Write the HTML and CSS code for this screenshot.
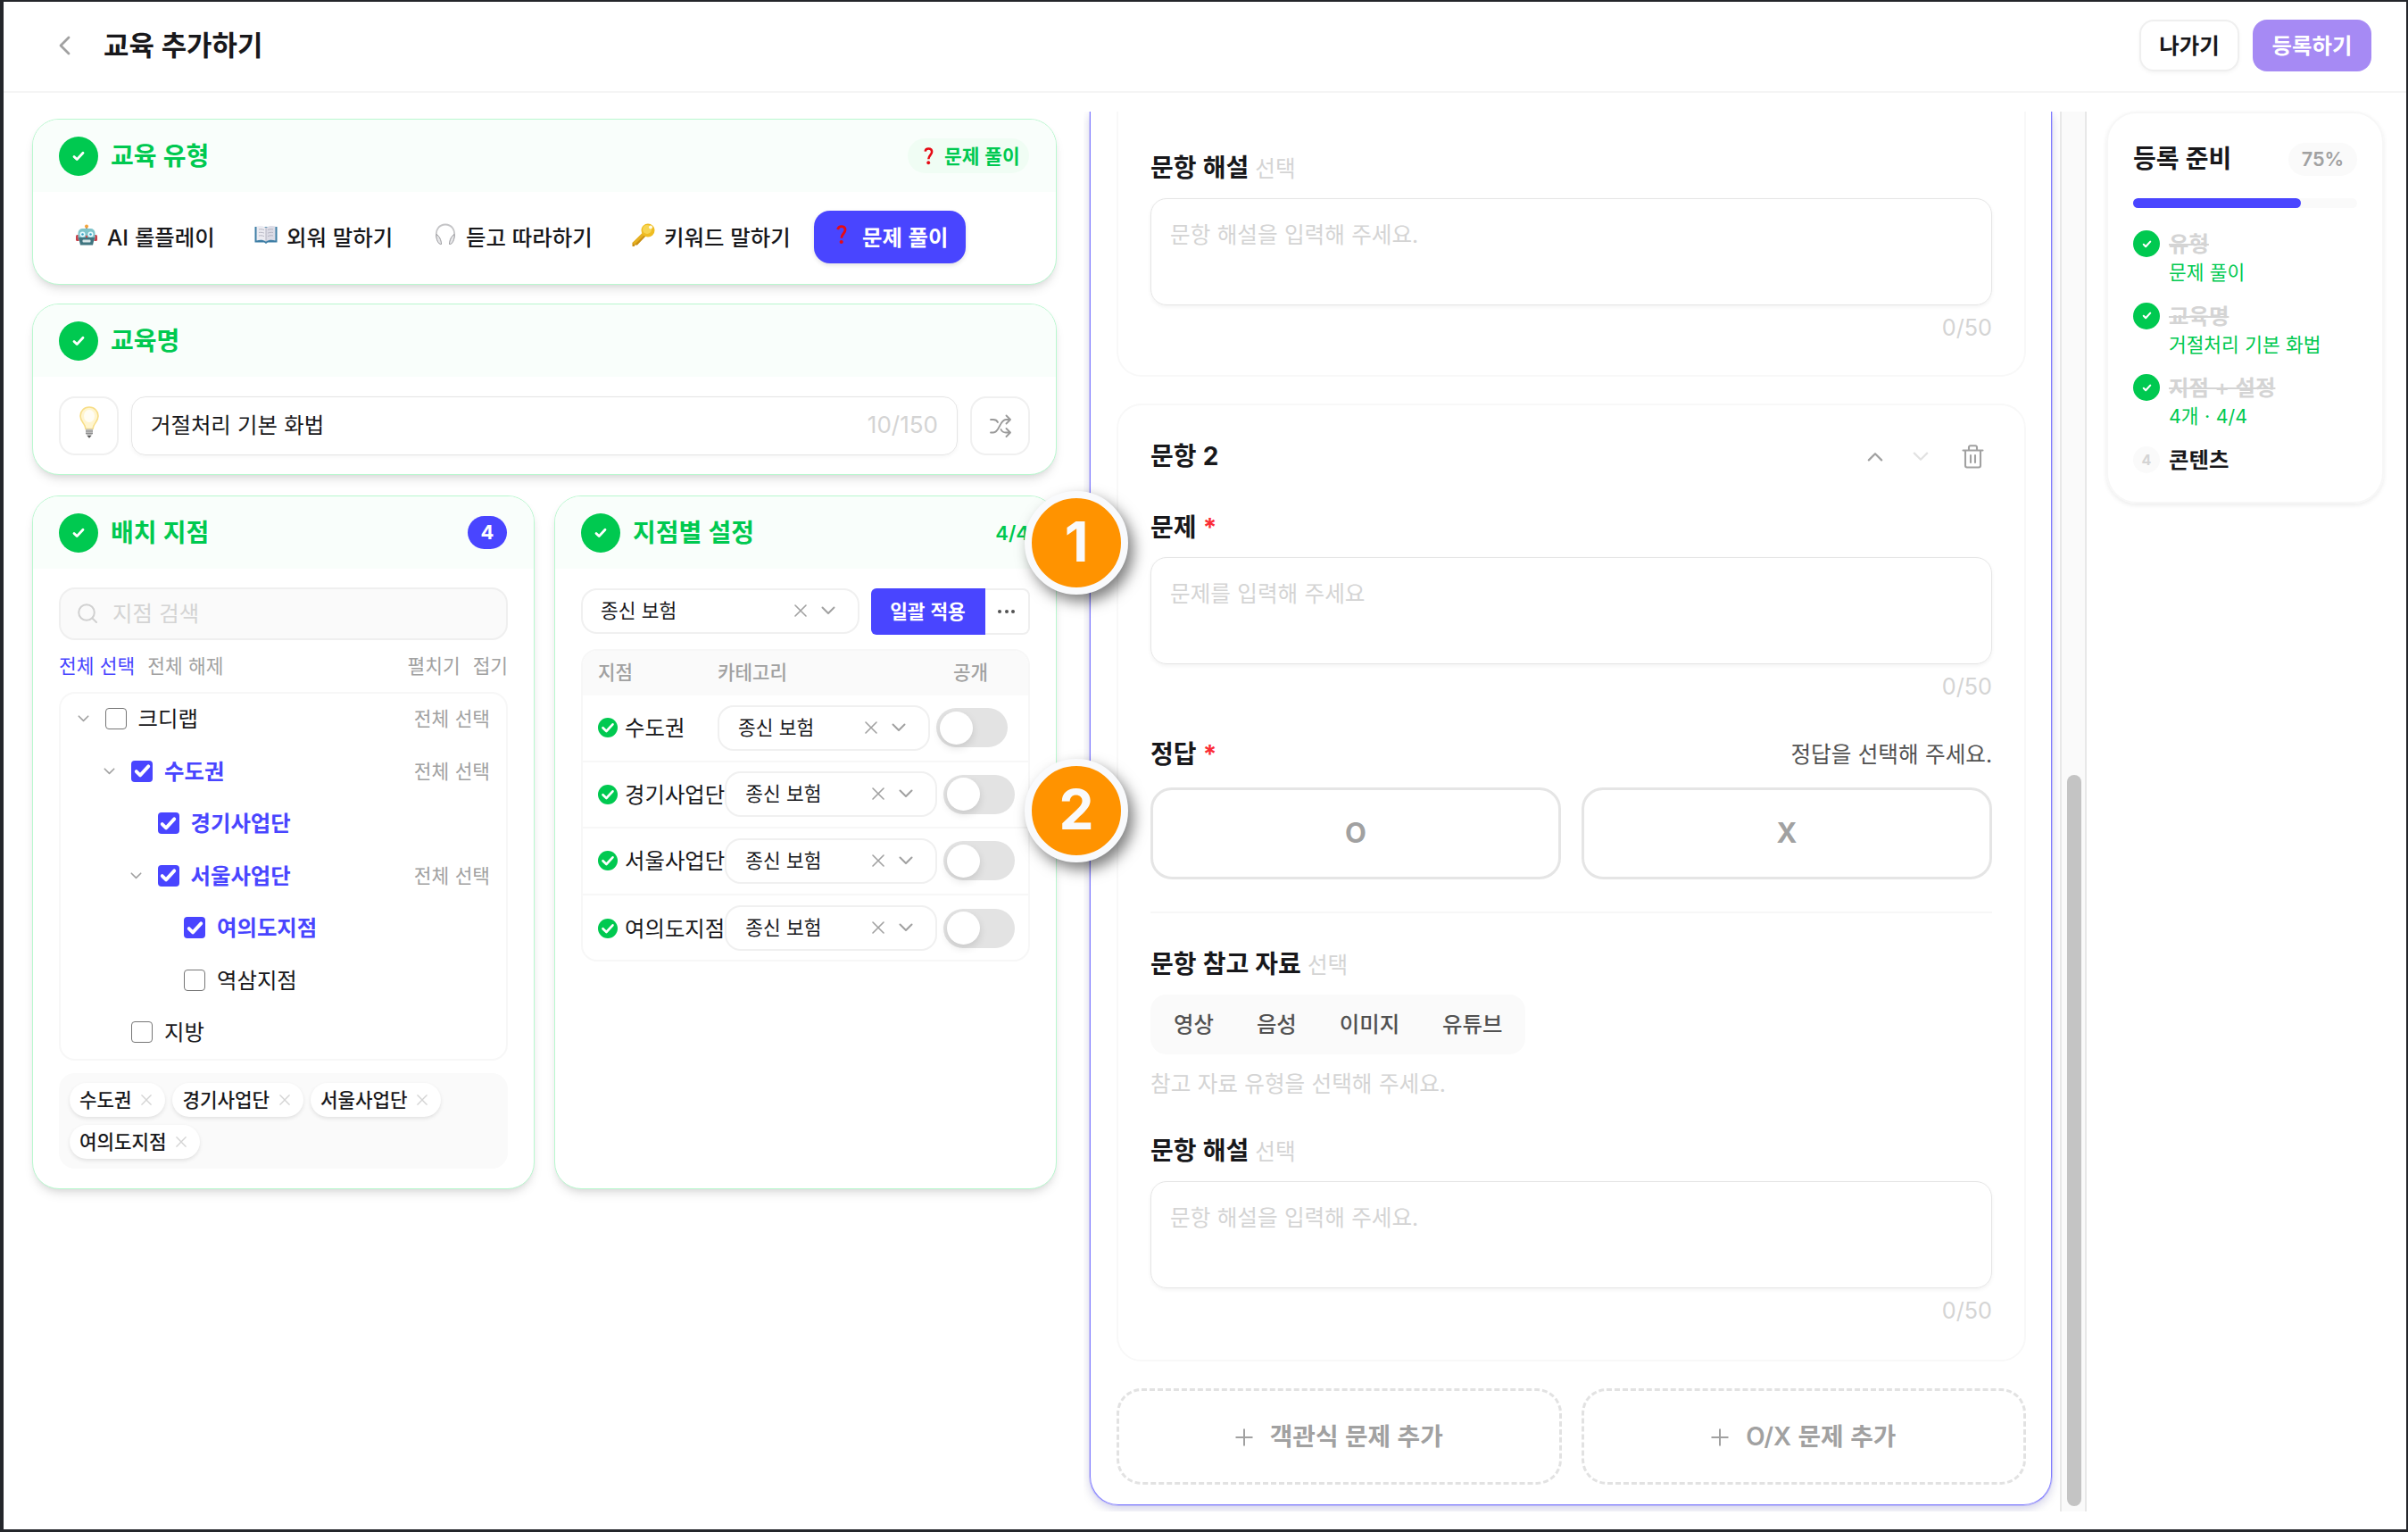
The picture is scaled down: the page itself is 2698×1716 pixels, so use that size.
FILE: index.html
```html
<!DOCTYPE html>
<html lang="ko">

<head>
    <meta charset="UTF-8">
    <meta name="viewport" content="width=device-width, initial-scale=1.0">
    <title>교육 추가하기</title>
    <link rel="stylesheet" href="styles.css">
</head>

<body>
    <!-- icons -->
    <svg class="sprite" xmlns="http://www.w3.org/2000/svg">
        <symbol id="check" viewBox="0 0 14 12">
            <path d="M2 6.4 5.2 9.6 12 2.2" fill="none" stroke="currentColor" stroke-width="2.8" stroke-linecap="round" stroke-linejoin="round" />
        </symbol>
        <symbol id="down" viewBox="0 0 16 10">
            <path d="M1.5 1.5 8 8l6.500-6.500" fill="none" stroke="currentColor" stroke-width="2" stroke-linecap="round" stroke-linejoin="round" />
        </symbol>
        <symbol id="close" viewBox="0 0 14 14">
            <path d="M1 1 13 13M13 1 1 13" fill="none" stroke="currentColor" stroke-width="1.6" stroke-linecap="round" />
        </symbol>
        <symbol id="plus" viewBox="0 0 20 20">
            <path d="M10 .5v19M.5 10h19" fill="none" stroke="currentColor" stroke-width="2" />
        </symbol>
        <symbol id="question" viewBox="0 0 12 22">
            <path d="M1.800 5.200C2 2.800 3.600 1.600 5.800 1.600c2.500 0 4.200 1.500 4.200 4 0 3.700-4 4.200-4.200 9" fill="none" stroke="#e60a14" stroke-width="2.800" />
            <circle cx="5.700" cy="19" r="2.100" fill="#e60a14" />
        </symbol>
        <symbol id="done" viewBox="0 0 22 22">
            <circle cx="11" cy="11" r="11" fill="#00c950" />
            <path d="M5.500 11.200 9.400 15 16.500 7.300" fill="none" stroke="#fff" stroke-width="2.600" stroke-linecap="round" stroke-linejoin="round" />
        </symbol>
    </svg>

    <header class="topbar">
        <svg class="back" viewBox="0 0 14 22"><path d="M12 2 3 11l9 9" /></svg>
        <h1>교육 추가하기</h1>
        <div class="topbar-actions">
            <button class="btn-exit">나가기</button>
            <button class="btn-submit">등록하기</button>
        </div>
    </header>

    <main>
        <section class="left">
            <div class="card card-type">
                <div class="card-head">
                    <span class="circle"><svg><use href="#check" /></svg></span>
                    <h2>교육 유형</h2>
                    <span class="type-badge"><svg><use href="#question" /></svg>문제 풀이</span>
                </div>
                <div class="types">
                    <button class="type type-ai">
                        <svg class="emoji" viewBox="0 0 26 26">
                            <rect x="1" y="13" width="4" height="7" rx="1.500" fill="#c9414a" />
                            <rect x="21" y="13" width="4" height="7" rx="1.500" fill="#c9414a" />
                            <path d="M12 4h2v4h-2z" fill="#7a8d96" />
                            <circle cx="13" cy="3.500" r="2" fill="#f2a33c" />
                            <rect x="3.500" y="6" width="19" height="15" rx="5" fill="#7fc4ca" />
                            <path d="M4 16h18l-2 8.500H6z" fill="#3f7580" />
                            <circle cx="8.500" cy="12.500" r="3" fill="#e9fbff" />
                            <circle cx="17.500" cy="12.500" r="3" fill="#e9fbff" />
                            <circle cx="8.500" cy="12.500" r="1.300" fill="#37a3c4" />
                            <circle cx="17.500" cy="12.500" r="1.300" fill="#37a3c4" />
                            <path d="m13 13 1.500 3h-3z" fill="#d63d3d" />
                            <rect x="8.500" y="18.500" width="9" height="3" rx="1" fill="#d8e6e8" />
                        </svg>AI 롤플레이
                    </button>
                    <button class="type type-memo">
                        <svg class="emoji" viewBox="0 0 26 26">
                            <path d="M.5 4h25v17.500H15l-2 1.500-2-1.500H.5z" fill="#3f7fa6" />
                            <path d="M2.500 3.500C6 2.500 10 2.800 13 5v15.500c-3-2-7-2-10.500-1z" fill="#ececf2" />
                            <path d="M23.500 3.500C20 2.500 16 2.800 13 5v15.500c3-2 7-2 10.500-1z" fill="#dcdce6" />
                            <path d="M5 7c2-.4 4-.2 6 .6M5 10.500c2-.4 4-.2 6 .6M5 14c2-.4 4-.2 6 .6M21 7c-2-.4-4-.2-6 .6M21 10.500c-2-.4-4-.2-6 .6M21 14c-2-.4-4-.2-6 .6M13 5v15.500" fill="none" stroke="#a9a9b8" stroke-width=".8" />
                        </svg>외워 말하기
                    </button>
                    <button class="type type-listen">
                        <svg class="emoji" viewBox="0 0 26 26">
                            <path d="M3.500 16C1 8 6 1.500 13 1.500S25 8 22.500 16" fill="none" stroke="#c4c4c6" stroke-width="1.800" />
                            <path d="M3 12.500c3 1.500 5.500 6.500 5.500 11-3 1-6.500-6-5.500-11z" fill="#e6e6e8" stroke="#98989c" />
                            <path d="M23 12.500c-3 1.500-5.500 6.500-5.500 11 3 1 6.500-6 5.500-11z" fill="#e6e6e8" stroke="#98989c" />
                        </svg>듣고 따라하기
                    </button>
                    <button class="type type-keyword">
                        <svg class="emoji" viewBox="0 0 26 26">
                            <path d="m13 11 3 3L6 24.500H3V26H.5v-4z" fill="#c98f12" />
                            <path d="m12 10.500 2.500 2.500L3 24 .5 22z" fill="#e5b021" />
                            <circle cx="18" cy="8" r="7.500" fill="#efbd22" />
                            <circle cx="17" cy="7" r="5" fill="#f7d552" />
                            <circle cx="21" cy="4.500" r="2" fill="#fffbe8" />
                        </svg>키워드 말하기
                    </button>
                    <button class="type type-quiz active">
                        <span class="emoji"><svg class="q"><use href="#question" /></svg></span>문제 풀이
                    </button>
                </div>
            </div>

            <div class="card card-name">
                <div class="card-head">
                    <span class="circle"><svg><use href="#check" /></svg></span>
                    <h2>교육명</h2>
                </div>
                <div class="name-row">
                    <button class="icon-btn">
                        <svg class="bulb" viewBox="0 0 22 36">
                            <path d="M11 1C5 1 1 5.500 1 11c0 5 3.500 7.500 5 11 .6 1.500 1 3.500 1 3.500h8s.4-2 1-3.500c1.500-3.500 5-6 5-11C21 5.500 17 1 11 1z" fill="#fff5cf" stroke="#f7dd86" stroke-width="1.600" />
                            <ellipse cx="11" cy="11" rx="6" ry="7" fill="#fffdf4" />
                            <path d="M7 25.500h8v5.500l-2 2H9l-2-2z" fill="#bdbdbd" />
                            <path d="M7 28h8M7 30.500h8" stroke="#8f8f8f" />
                            <path d="M8.500 33h5L11 35.800z" fill="#555" />
                        </svg>
                    </button>
                    <div class="name-input"><span>거절처리 기본 화법</span><span class="count">10/150</span></div>
                    <button class="icon-btn">
                        <svg class="shuffle" viewBox="0 0 24 26"><path d="M1 6h3c2.500 0 4 1 5 3M1 20.500h3c7 0 7-14.500 14-14.500h4M12.500 17c1 2.500 3 3.500 5.500 3.500h4M18.500 1.500 23 6l-4.500 4.500M18.500 16l4.500 4.500-4.500 4.500" /></svg>
                    </button>
                </div>
            </div>

            <div class="columns">
                <div class="card card-branch">
                    <div class="card-head">
                        <span class="circle"><svg><use href="#check" /></svg></span>
                        <h2>배치 지점</h2>
                        <span class="num-badge">4</span>
                    </div>
                    <div class="card-body">
                        <div class="search">
                            <svg viewBox="0 0 22 22"><circle cx="10" cy="10" r="8.800" /><path d="m16.500 16.500 4.500 4.500" /></svg>
                            지점 검색
                        </div>
                        <div class="links">
                            <a class="primary">전체 선택</a><a>전체 해제</a>
                            <a class="push">펼치기</a><a>접기</a>
                        </div>
                        <ul class="tree">
                            <li class="lv0"><span class="arrow"><svg><use href="#down" /></svg></span><span class="box"></span>크디랩<a>전체 선택</a></li>
                            <li class="lv1 on"><span class="arrow"><svg><use href="#down" /></svg></span><span class="box"><svg><use href="#check" /></svg></span>수도권<a>전체 선택</a></li>
                            <li class="lv2 on"><span class="arrow"></span><span class="box"><svg><use href="#check" /></svg></span>경기사업단</li>
                            <li class="lv2 on"><span class="arrow"><svg><use href="#down" /></svg></span><span class="box"><svg><use href="#check" /></svg></span>서울사업단<a>전체 선택</a></li>
                            <li class="lv3 on"><span class="arrow"></span><span class="box"><svg><use href="#check" /></svg></span>여의도지점</li>
                            <li class="lv3"><span class="arrow"></span><span class="box"></span>역삼지점</li>
                            <li class="lv1"><span class="arrow"></span><span class="box"></span>지방</li>
                        </ul>
                        <div class="tags">
                            <span class="tag">수도권<svg><use href="#close" /></svg></span>
                            <span class="tag">경기사업단<svg><use href="#close" /></svg></span>
                            <span class="tag">서울사업단<svg><use href="#close" /></svg></span>
                            <span class="tag">여의도지점<svg><use href="#close" /></svg></span>
                        </div>
                    </div>
                </div>

                <div class="card card-setting">
                    <div class="card-head">
                        <span class="circle"><svg><use href="#check" /></svg></span>
                        <h2>지점별 설정</h2>
                        <span class="ratio">4/4</span>
                    </div>
                    <div class="card-body">
                        <div class="bulk">
                            <div class="select">종신 보험<svg class="x"><use href="#close" /></svg><svg class="v"><use href="#down" /></svg></div>
                            <button class="apply">일괄 적용</button>
                            <button class="more"><i></i><i></i><i></i></button>
                        </div>
                        <div class="table">
                            <div class="thead"><span>지점</span><span>카테고리</span><span>공개</span></div>
                            <div class="row">
                                <span class="name"><svg><use href="#done" /></svg>수도권</span>
                                <div class="select">종신 보험<svg class="x"><use href="#close" /></svg><svg class="v"><use href="#down" /></svg></div>
                                <span class="toggle"></span>
                            </div>
                            <div class="row">
                                <span class="name"><svg><use href="#done" /></svg>경기사업단</span>
                                <div class="select">종신 보험<svg class="x"><use href="#close" /></svg><svg class="v"><use href="#down" /></svg></div>
                                <span class="toggle"></span>
                            </div>
                            <div class="row">
                                <span class="name"><svg><use href="#done" /></svg>서울사업단</span>
                                <div class="select">종신 보험<svg class="x"><use href="#close" /></svg><svg class="v"><use href="#down" /></svg></div>
                                <span class="toggle"></span>
                            </div>
                            <div class="row">
                                <span class="name"><svg><use href="#done" /></svg>여의도지점</span>
                                <div class="select">종신 보험<svg class="x"><use href="#close" /></svg><svg class="v"><use href="#down" /></svg></div>
                                <span class="toggle"></span>
                            </div>
                        </div>
                    </div>
                </div>
            </div>
        </section>

        <section class="scroller">
            <div class="panel">
                <div class="question first">
                    <h3>문항 해설 <small>선택</small></h3>
                    <div class="textarea">문항 해설을 입력해 주세요.</div>
                    <p class="counter">0/50</p>
                </div>

                <div class="question second">
                    <div class="question-head">
                        <h3>문항 2</h3>
                        <svg class="up"><use href="#down" /></svg>
                        <svg class="dn"><use href="#down" /></svg>
                        <svg class="trash" viewBox="0 0 24 27"><path d="M1 6.500h22M3.500 6.500V23.500a2 2 0 0 0 2 2h13a2 2 0 0 0 2-2V6.500M7.500 6V3a1.700 1.700 0 0 1 1.700-1.700h5.600A1.700 1.700 0 0 1 16.500 3v3M9.500 12v8M14.500 12v8" /></svg>
                    </div>
                    <h3 class="label-question">문제 <em>*</em></h3>
                    <div class="textarea">문제를 입력해 주세요</div>
                    <p class="counter">0/50</p>

                    <div class="answer-head">
                        <h3>정답 <em>*</em></h3>
                        <span>정답을 선택해 주세요.</span>
                    </div>
                    <div class="answers">
                        <button>O</button>
                        <button>X</button>
                    </div>
                    <hr>

                    <h3 class="label-ref">문항 참고 자료 <small>선택</small></h3>
                    <div class="segment"><span>영상</span><span>음성</span><span>이미지</span><span>유튜브</span></div>
                    <p class="hint">참고 자료 유형을 선택해 주세요.</p>

                    <h3 class="label-desc">문항 해설 <small>선택</small></h3>
                    <div class="textarea">문항 해설을 입력해 주세요.</div>
                    <p class="counter">0/50</p>
                </div>

                <div class="add-row">
                    <button><svg><use href="#plus" /></svg>객관식 문제 추가</button>
                    <button><svg><use href="#plus" /></svg>O/X 문제 추가</button>
                </div>
            </div>
        </section>
        <div class="scrollbar"><div class="thumb"></div></div>

        <aside class="ready">
            <div class="ready-head">
                <h3>등록 준비</h3>
                <span>75%</span>
            </div>
            <div class="progress"><div class="bar" style="width: 75%"></div></div>
            <ol>
                <li class="done">
                    <span class="circle"><svg><use href="#check" /></svg></span>
                    <div><b>유형</b><p>문제 풀이</p></div>
                </li>
                <li class="done">
                    <span class="circle"><svg><use href="#check" /></svg></span>
                    <div><b>교육명</b><p>거절처리 기본 화법</p></div>
                </li>
                <li class="done">
                    <span class="circle"><svg><use href="#check" /></svg></span>
                    <div><b>지점 + 설정</b><p>4개 · 4/4</p></div>
                </li>
                <li>
                    <span class="circle">4</span>
                    <div><b>콘텐츠</b></div>
                </li>
            </ol>
        </aside>
    </main>

    <!-- guide markers -->
    <div class="marker marker-1">1</div>
    <div class="marker marker-2">2</div>
</body>

</html>
```
FILE: styles.css
```css
* {
    box-sizing: border-box;
    margin: 0;
    padding: 0;
}

body {
    position: relative;
    width: 2698px;
    height: 1716px;
    overflow: hidden;
    border: solid #24262b;
    border-width: 2px 2px 3px 4px;
    background: #fff;
    color: #18181b;
    font-family: Inter, "Noto Sans CJK KR", sans-serif;
    font-size: 24.4px;
    line-height: 30px;
    word-spacing: 0.02em;
    white-space: nowrap;
}

button {
    border: 0;
    background: none;
    color: inherit;
    font: inherit;
    word-spacing: inherit;
}

ul,
ol {
    list-style: none;
}

em {
    font-style: normal;
    color: #fb2c36;
}

.sprite {
    display: none;
}

svg {
    flex: none;
}

/* header */
.topbar {
    display: flex;
    align-items: center;
    height: 102px;
    padding: 0 39px 2px 61px;
    border-bottom: 2px solid #f5f5f5;
}

.topbar .back {
    width: 14px;
    height: 22px;
    margin-right: 37px;
    fill: none;
    stroke: #a1a1a1;
    stroke-width: 2.8;
    stroke-linecap: round;
    stroke-linejoin: round;
}

.topbar h1 {
    font-size: 30.9px;
    font-weight: 700;
}

.topbar-actions {
    display: flex;
    gap: 15px;
    margin-left: auto;
}

.btn-exit,
.btn-submit {
    height: 58px;
    border-radius: 16px;
    font-weight: 600;
}

.btn-exit {
    width: 112px;
    border: 2px solid #efefef;
    box-shadow: 0 2px 4px rgba(0, 0, 0, 0.04);
}

.btn-submit {
    width: 133px;
    background: #a68af4;
    color: #fff;
}

main {
    display: flex;
    align-items: flex-start;
    padding: 21px 0 0 32px;
}

/* left side cards */
.left {
    width: 1148px;
    padding-top: 8px;
}

.card {
    overflow: hidden;
    border: 1px solid #b9f8cf;
    border-radius: 30px;
    background: #fff;
    box-shadow: 0 7px 12px -2px rgba(0, 0, 0, 0.1), 0 4px 8px -4px rgba(0, 0, 0, 0.1);
}

.card-head {
    display: flex;
    align-items: center;
    height: 81px;
    padding: 0 30px 0 29px;
    background: #f9fefb;
    color: #00c950;
}

.card-head h2 {
    margin-left: 14px;
    font-size: 28px;
    font-weight: 700;
}

.circle {
    display: flex;
    flex: none;
    align-items: center;
    justify-content: center;
    width: 44px;
    height: 44px;
    border-radius: 50%;
    background: #00c950;
    color: #fff;
}

.circle svg {
    width: 14px;
    height: 12px;
}

.card-type {
    height: 186px;
}

.type-badge {
    display: flex;
    align-items: center;
    width: 136px;
    height: 39px;
    margin-left: auto;
    padding-left: 18px;
    border-radius: 20px;
    background: #f0fdf4;
    font-size: 21.4px;
    font-weight: 600;
}

.type-badge svg {
    width: 11px;
    height: 20px;
    margin-right: 12px;
}

.types {
    display: flex;
    gap: 8px;
    padding: 21px 29px;
}

.type {
    display: flex;
    align-items: center;
    height: 59px;
    padding-left: 18px;
    border-radius: 18px;
    font-weight: 500;
}

.type .emoji {
    width: 26px;
    height: 26px;
    margin: -5px 10px 0 0;
}

.type .q {
    display: block;
    width: 12px;
    height: 22px;
    margin: 2px 7px;
}

.type-ai {
    width: 193px;
}

.type-memo {
    width: 193px;
}

.type-listen {
    width: 214px;
}

.type-keyword {
    width: 214px;
}

.type-quiz {
    width: 170px;
}

.type.active {
    background: #4945ff;
    color: #fff;
    font-weight: 600;
    box-shadow: 0 2px 5px rgba(0, 0, 0, 0.12);
}

.card-name {
    height: 192px;
    margin-top: 21px;
}

.name-row {
    display: flex;
    gap: 14px;
    padding: 22px 29px;
}

.icon-btn {
    display: flex;
    align-items: center;
    justify-content: center;
    width: 67px;
    height: 66px;
    border: 2px solid #f0f0f0;
    border-radius: 18px;
}

.bulb {
    width: 22px;
    height: 36px;
    margin-top: -8px;
}

.shuffle {
    width: 24px;
    height: 26px;
    fill: none;
    stroke: #9a9a9a;
    stroke-width: 1.8;
    stroke-linecap: round;
    stroke-linejoin: round;
}

.name-input {
    display: flex;
    flex: 1;
    align-items: center;
    justify-content: space-between;
    height: 66px;
    padding: 0 21px 2px;
    border: 1.5px solid #e5e5e5;
    border-radius: 16px;
    box-shadow: 0 2px 4px rgba(0, 0, 0, 0.04);
}

.name-input .count {
    color: #d4d4d4;
    font-size: 26px;
}

.columns {
    display: flex;
    justify-content: space-between;
    margin-top: 23px;
}

.columns .card {
    width: 563px;
    height: 777px;
}

.card-body {
    padding: 21px 29px;
}

/* branch tree */
.num-badge {
    width: 44px;
    height: 37px;
    margin-left: auto;
    border-radius: 19px;
    background: #4945ff;
    color: #fff;
    font-size: 22px;
    font-weight: 700;
    line-height: 37px;
    text-align: center;
}

.search {
    display: flex;
    align-items: center;
    gap: 17px;
    height: 59px;
    padding: 0 0 1px 19px;
    border: 2px solid #efefef;
    border-radius: 18px;
    background: #fafafa;
    color: #d4d4d4;
}

.search svg {
    width: 22px;
    height: 22px;
    fill: none;
    stroke: #d0d0d0;
    stroke-width: 2;
    stroke-linecap: round;
}

.links {
    display: flex;
    gap: 14px;
    height: 58px;
    color: #a1a1a1;
    font-size: 21.4px;
    line-height: 58px;
}

.links .primary {
    color: #4945ff;
}

.links .push {
    margin-left: auto;
}

.tree {
    height: 413px;
    border: 2px solid #f7f7f7;
    border-radius: 18px;
}

.tree li {
    display: flex;
    align-items: center;
    height: 58.5px;
    padding: 0 18px 2px 0;
}

.tree li.on {
    color: #4945ff;
    font-weight: 600;
}

.tree .lv0 {
    padding-left: 18.5px;
}

.tree .lv1 {
    padding-left: 48px;
}

.tree .lv2 {
    padding-left: 77.5px;
}

.tree .lv3 {
    padding-left: 107px;
}

.tree .arrow {
    display: flex;
    width: 31px;
    color: #a1a1a1;
}

.tree .arrow svg {
    width: 13px;
    height: 8px;
}

.tree .box {
    display: flex;
    align-items: center;
    justify-content: center;
    width: 24px;
    height: 24px;
    margin-right: 13px;
    border: 1.5px solid #767676;
    border-radius: 4px;
}

.tree .on .box {
    border: 0;
    background: #4945ff;
    color: #fff;
}

.tree .on .box svg {
    width: 19px;
    height: 17px;
}

.tree a {
    margin-left: auto;
    color: #a1a1a1;
    font-size: 21.4px;
    font-weight: 400;
}

.tags {
    display: flex;
    flex-wrap: wrap;
    gap: 8px;
    height: 107px;
    margin-top: 14px;
    padding: 11px 12px;
    border-radius: 18px;
    background: #fafafa;
}

.tag {
    display: flex;
    align-items: center;
    height: 38px;
    padding: 0 15px 0 11px;
    border-radius: 19px;
    background: #fff;
    font-size: 21.2px;
    font-weight: 500;
    box-shadow: 0 2px 4px rgba(0, 0, 0, 0.1);
}

.tag svg {
    width: 12px;
    height: 12px;
    margin-left: 11px;
    color: #d4d4d4;
}

/* branch settings */
.ratio {
    margin-left: auto;
    font-size: 22px;
    font-weight: 600;
}

.bulk {
    display: flex;
    height: 52px;
    margin-top: 1px;
}

.select {
    display: flex;
    flex: none;
    align-items: center;
    width: 238px;
    height: 51px;
    padding: 0 25px 1px 21px;
    border: 2px solid #f0f0f0;
    border-radius: 18px;
    background: #fff;
    font-size: 21.4px;
}

.select .x {
    width: 14px;
    height: 14px;
    margin-left: auto;
    color: #a1a1a1;
}

.select .v {
    width: 16px;
    height: 10px;
    margin-left: 16px;
    color: #a1a1a1;
}

.bulk .select {
    width: 311.5px;
    margin-right: 13px;
    padding-left: 20px;
}

.apply {
    width: 128px;
    border-radius: 6px 0 0 6px;
    background: #4945ff;
    color: #fff;
    font-size: 21.4px;
    font-weight: 600;
}

.more {
    display: flex;
    flex: 1;
    align-items: center;
    justify-content: center;
    gap: 3.5px;
    border: 2px solid #efefef;
    border-left: 0;
    border-radius: 0 8px 8px 0;
}

.more i {
    width: 4px;
    height: 4px;
    border-radius: 50%;
    background: #525252;
}

.table {
    height: 350px;
    margin-top: 16px;
    overflow: hidden;
    border: 2px solid #f7f7f7;
    border-radius: 18px;
}

.thead {
    display: flex;
    height: 50px;
    padding-left: 17px;
    background: #fafafa;
    color: #a1a1a1;
    font-size: 21.2px;
    font-weight: 500;
    line-height: 48px;
}

.thead span {
    flex: none;
    width: 134px;
}

.thead span:nth-child(2) {
    width: 264px;
}

.row {
    display: flex;
    align-items: center;
    height: 74.5px;
    padding-left: 17px;
    border-bottom: 2px solid #f7f7f7;
}

.row:last-child {
    border-bottom: 0;
}

.name {
    display: flex;
    flex: none;
    align-items: center;
    min-width: 134px;
}

.name svg {
    width: 22px;
    height: 22px;
    margin-right: 8px;
}

.toggle {
    flex: none;
    width: 80px;
    height: 44px;
    margin-left: 7px;
    padding: 3.5px;
    border-radius: 22px;
    background: #e3e3e3;
}

.toggle::before {
    content: "";
    display: block;
    width: 37px;
    height: 37px;
    border-radius: 50%;
    background: #fff;
    box-shadow: 0 4px 10px rgba(0, 0, 0, 0.12);
}

/* question panel */
.scroller {
    width: 1094px;
    height: 1568px;
    margin-left: 30px;
    padding: 0 9px 0 7px;
    overflow: hidden;
}

.panel {
    padding: 0 28px 22px 29px;
    border: 1px solid #807cff;
    border-top: 0;
    border-radius: 0 0 32px 32px;
    box-shadow: 0 0 0 1px rgba(73, 69, 255, 0.2), 0 4px 8px rgba(73, 69, 255, 0.12), 0 4px 14px rgba(0, 0, 0, 0.1);
}

.question {
    padding: 0 36px;
    border: 2px solid #f8f8f8;
    border-radius: 28px;
}

.question h3 {
    font-size: 28px;
    font-weight: 700;
    line-height: 36px;
}

.question h3 small {
    color: #d4d4d4;
    font-size: 24.6px;
    font-weight: 400;
}

.question.first {
    height: 297px;
    padding-top: 45px;
    border-top: 0;
    border-radius: 0 0 28px 28px;
}

.question.second {
    height: 1073px;
    margin-top: 30px;
    padding-top: 37px;
}

.question-head {
    display: flex;
    align-items: center;
    height: 40px;
    padding-right: 9px;
    color: #a1a1a1;
}

.question-head h3 {
    margin-right: auto;
    color: #18181b;
}

.question-head .up,
.question-head .dn {
    width: 18px;
    height: 11px;
}

.question-head .up {
    transform: rotate(180deg);
}

.question-head .dn {
    margin: 0 37px 0 33px;
    color: #e2e2e2;
}

.question-head .trash {
    width: 25px;
    height: 27px;
    fill: none;
    stroke: #a1a1a1;
    stroke-width: 2.1;
    stroke-linecap: round;
}

.textarea {
    height: 120px;
    margin-top: 15px;
    padding: 25px 21px;
    border: 1.5px solid #e5e5e5;
    border-radius: 18px;
    box-shadow: 0 2px 4px rgba(0, 0, 0, 0.05);
    color: #d4d4d4;
    font-size: 24.6px;
}

.counter {
    margin-top: 10px;
    color: #d4d4d4;
    font-size: 25.2px;
    text-align: right;
}

.question .label-question {
    margin-top: 42px;
}

.answer-head {
    display: flex;
    align-items: center;
    justify-content: space-between;
    margin-top: 43px;
}

.answer-head span {
    color: #525252;
    font-size: 24.6px;
}

.answers {
    display: grid;
    grid-template-columns: 1fr 1fr;
    gap: 23px;
    margin-top: 19px;
}

.answers button {
    height: 103px;
    padding-bottom: 1px;
    border: 3px solid #e5e5e5;
    border-radius: 24px;
    color: #a1a1a1;
    font-size: 31px;
    font-weight: 700;
}

hr {
    margin-top: 36px;
    border: 0;
    border-top: 2px solid #f7f7f7;
}

.question .label-ref {
    margin-top: 39px;
}

.segment {
    display: inline-flex;
    gap: 4px;
    height: 67px;
    margin-top: 15px;
    padding: 4px;
    border-radius: 18px;
    background: #fafafa;
    color: #525252;
    font-weight: 500;
    line-height: 59px;
    vertical-align: top;
}

.segment span {
    padding: 0 22px;
}

.hint {
    margin-top: 18px;
    color: #d4d4d4;
    font-size: 24.6px;
}

.question .label-desc {
    margin-top: 42px;
}

.add-row {
    display: grid;
    grid-template-columns: 1fr 1fr;
    gap: 22px;
    margin-top: 30px;
}

.add-row button {
    display: flex;
    align-items: center;
    justify-content: center;
    height: 108px;
    padding-bottom: 1px;
    border: 3px dashed #e2e2e2;
    border-radius: 28px;
    color: #a1a1a1;
    font-size: 27.8px;
    font-weight: 600;
}

.add-row svg {
    width: 20px;
    height: 20px;
    margin: 2px 19px 0 0;
}

.scrollbar {
    width: 30px;
    height: 1568px;
    padding: 743px 6px 0;
    border: solid #e8e8e8;
    border-width: 0 2px;
    background: #fafafa;
}

.thumb {
    width: 16px;
    height: 819px;
    border-radius: 8px;
    background: #c4c4c4;
}

/* progress summary */
.ready {
    width: 311px;
    height: 439px;
    margin-left: 22px;
    padding: 32px 28px;
    border: 2px solid #f7f7f7;
    border-radius: 34px;
    box-shadow: 0 2px 5px rgba(0, 0, 0, 0.08);
}

.ready-head {
    display: flex;
    align-items: center;
    justify-content: space-between;
    height: 38px;
}

.ready-head h3 {
    font-size: 28px;
    font-weight: 700;
}

.ready-head span {
    width: 77px;
    border-radius: 19px;
    background: #fafafa;
    color: #a1a1a1;
    font-size: 21.6px;
    font-weight: 600;
    line-height: 37px;
    text-align: center;
}

.progress {
    height: 11px;
    margin: 25px 0 25px;
    border-radius: 6px;
    background: #fafafa;
}

.bar {
    height: 11px;
    border-radius: 6px;
    background: #4945ff;
}

.ready li {
    display: flex;
    gap: 10px;
    height: 80.7px;
}

.ready b {
    display: block;
    font-weight: 600;
    line-height: 30px;
}

.ready p {
    color: #00c950;
    font-size: 21.4px;
    line-height: 34px;
}

.ready .done b {
    color: #d4d4d4;
    text-decoration: line-through;
}

.ready .circle {
    width: 30px;
    height: 30px;
}

.ready .circle svg {
    width: 11px;
    height: 9px;
}

.ready li:last-child .circle {
    background: #fafafa;
    color: #d4d4d4;
    font-size: 16px;
    font-weight: 700;
}

/* numbered markers on top of the page */
.marker {
    position: absolute;
    left: 1144px;
    width: 116px;
    height: 116px;
    border: 8px solid #f9fafc;
    border-radius: 50%;
    background: #ff9300;
    box-shadow: 6px 8px 16px rgba(0, 0, 0, 0.5);
    color: #f9fafc;
    font-size: 62px;
    font-weight: 700;
    line-height: 98px;
    text-align: center;
}

.marker-1 {
    top: 548px;
}

.marker-2 {
    top: 848px;
}
```
